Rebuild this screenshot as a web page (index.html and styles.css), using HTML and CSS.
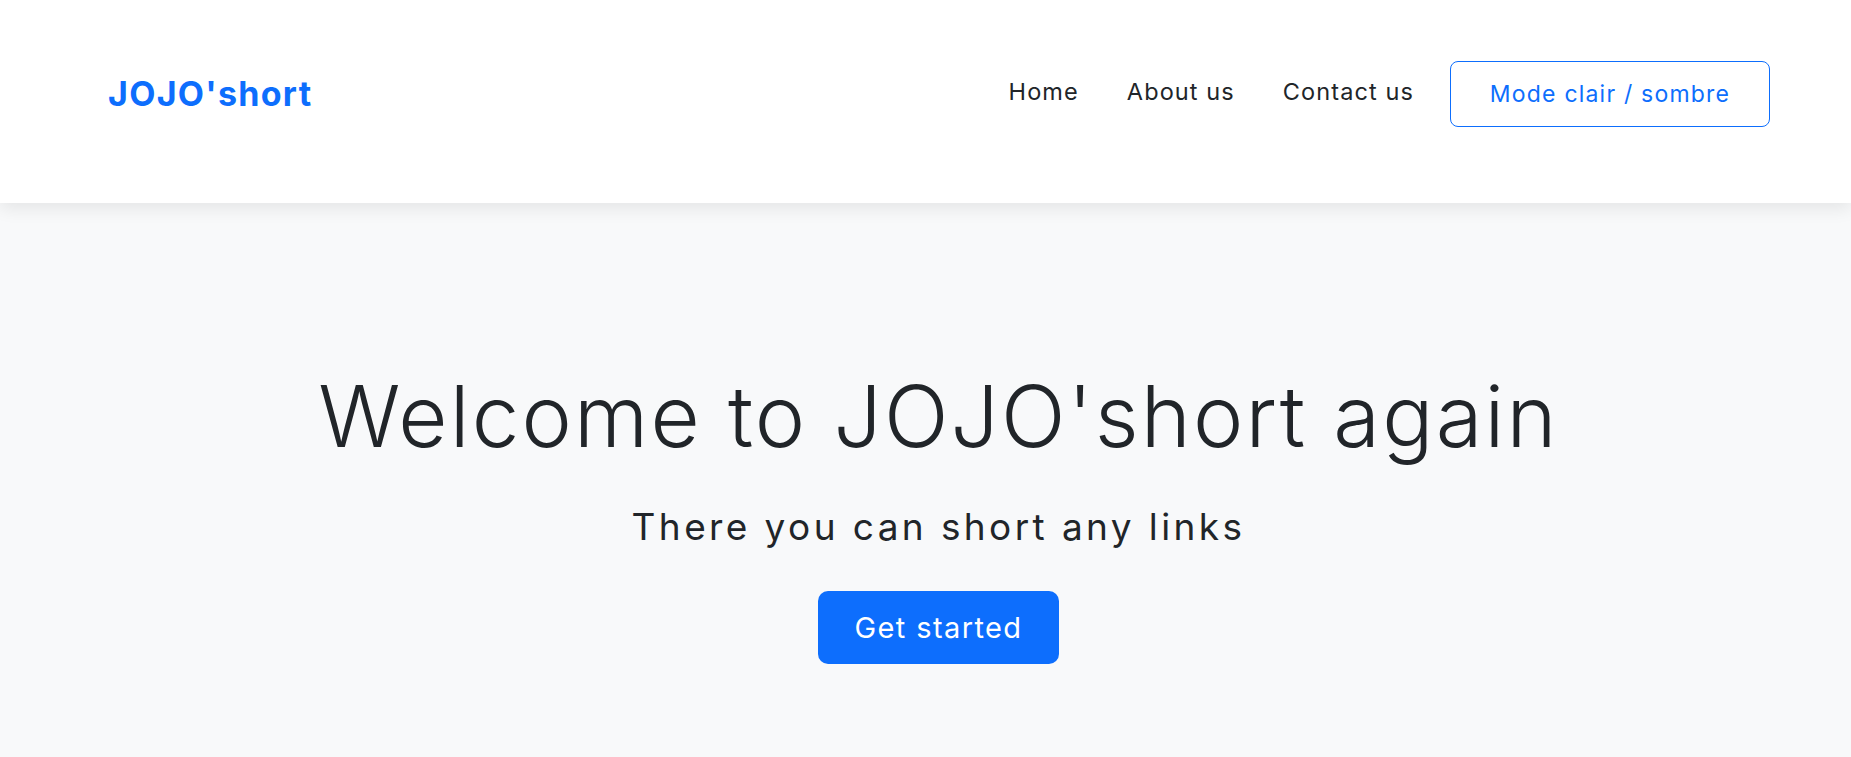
FILE: index.html
```html
<!DOCTYPE html>
<html lang="en">
<head>
<meta charset="utf-8">
<title>JOJO'short</title>
<link rel="stylesheet" href="styles.css">
</head>
<body>
<header class="site-header">
  <a class="brand" href="#">JOJO'short</a>
  <nav class="nav">
    <a class="nav-link" href="#">Home</a>
    <a class="nav-link" href="#">About us</a>
    <a class="nav-link" href="#">Contact us</a>
    <button class="btn-mode" type="button">Mode clair / sombre</button>
  </nav>
</header>
<main class="hero">
  <h1 class="hero-title">Welcome to JOJO'short again</h1>
  <p class="hero-sub">There you can short any links</p>
  <a class="btn-start" href="#">Get started</a>
</main>
</body>
</html>
```
FILE: styles.css
```css
* { box-sizing: border-box; }
html, body { margin: 0; height: 100%; }
body {
  font-family: "Inter", "Open Sans", sans-serif;
  background: #f8f9fa;
  color: #212529;
}
.site-header {
  position: relative;
  z-index: 2;
  height: 203px;
  background: #fff;
  box-shadow: 0 6px 16px rgba(0,0,0,0.08);
  display: flex;
  align-items: center;
  justify-content: space-between;
  padding: 0 81px 16px 108px;
}
.brand {
  color: #0d6efd;
  font-weight: 700;
  font-size: 34px;
  letter-spacing: 1.3px;
  text-decoration: none;
}
.nav {
  display: flex;
  align-items: center;
}
.nav-link {
  color: #212529;
  text-decoration: none;
  font-size: 23.5px;
  letter-spacing: 1.1px;
  margin-right: 48px;
  margin-top: -5px;
}
.nav-link:nth-child(3) { margin-right: 36px; }
.btn-mode {
  width: 320px;
  height: 66px;
  background: #fff;
  border: 1px solid #0d6efd;
  border-radius: 8px;
  color: #0d6efd;
  font-family: inherit;
  font-size: 23px;
  letter-spacing: 1.2px;
}
.hero {
  display: flex;
  flex-direction: column;
  align-items: center;
  padding: 163px 0 0 26px;
}
.hero-title {
  margin: 0;
  font-weight: 300;
  font-size: 85px;
  letter-spacing: 2.2px;
  line-height: 1.2;
}
.hero-sub {
  margin: 36px 0 0;
  font-size: 37px;
  letter-spacing: 3.4px;
  font-weight: 400;
}
.btn-start {
  margin-top: 42px;
  width: 241px;
  height: 73px;
  display: flex;
  align-items: center;
  justify-content: center;
  background: #0d6efd;
  color: #fff;
  border-radius: 10px;
  text-decoration: none;
  font-size: 29px;
  letter-spacing: 1.4px;
}
```
